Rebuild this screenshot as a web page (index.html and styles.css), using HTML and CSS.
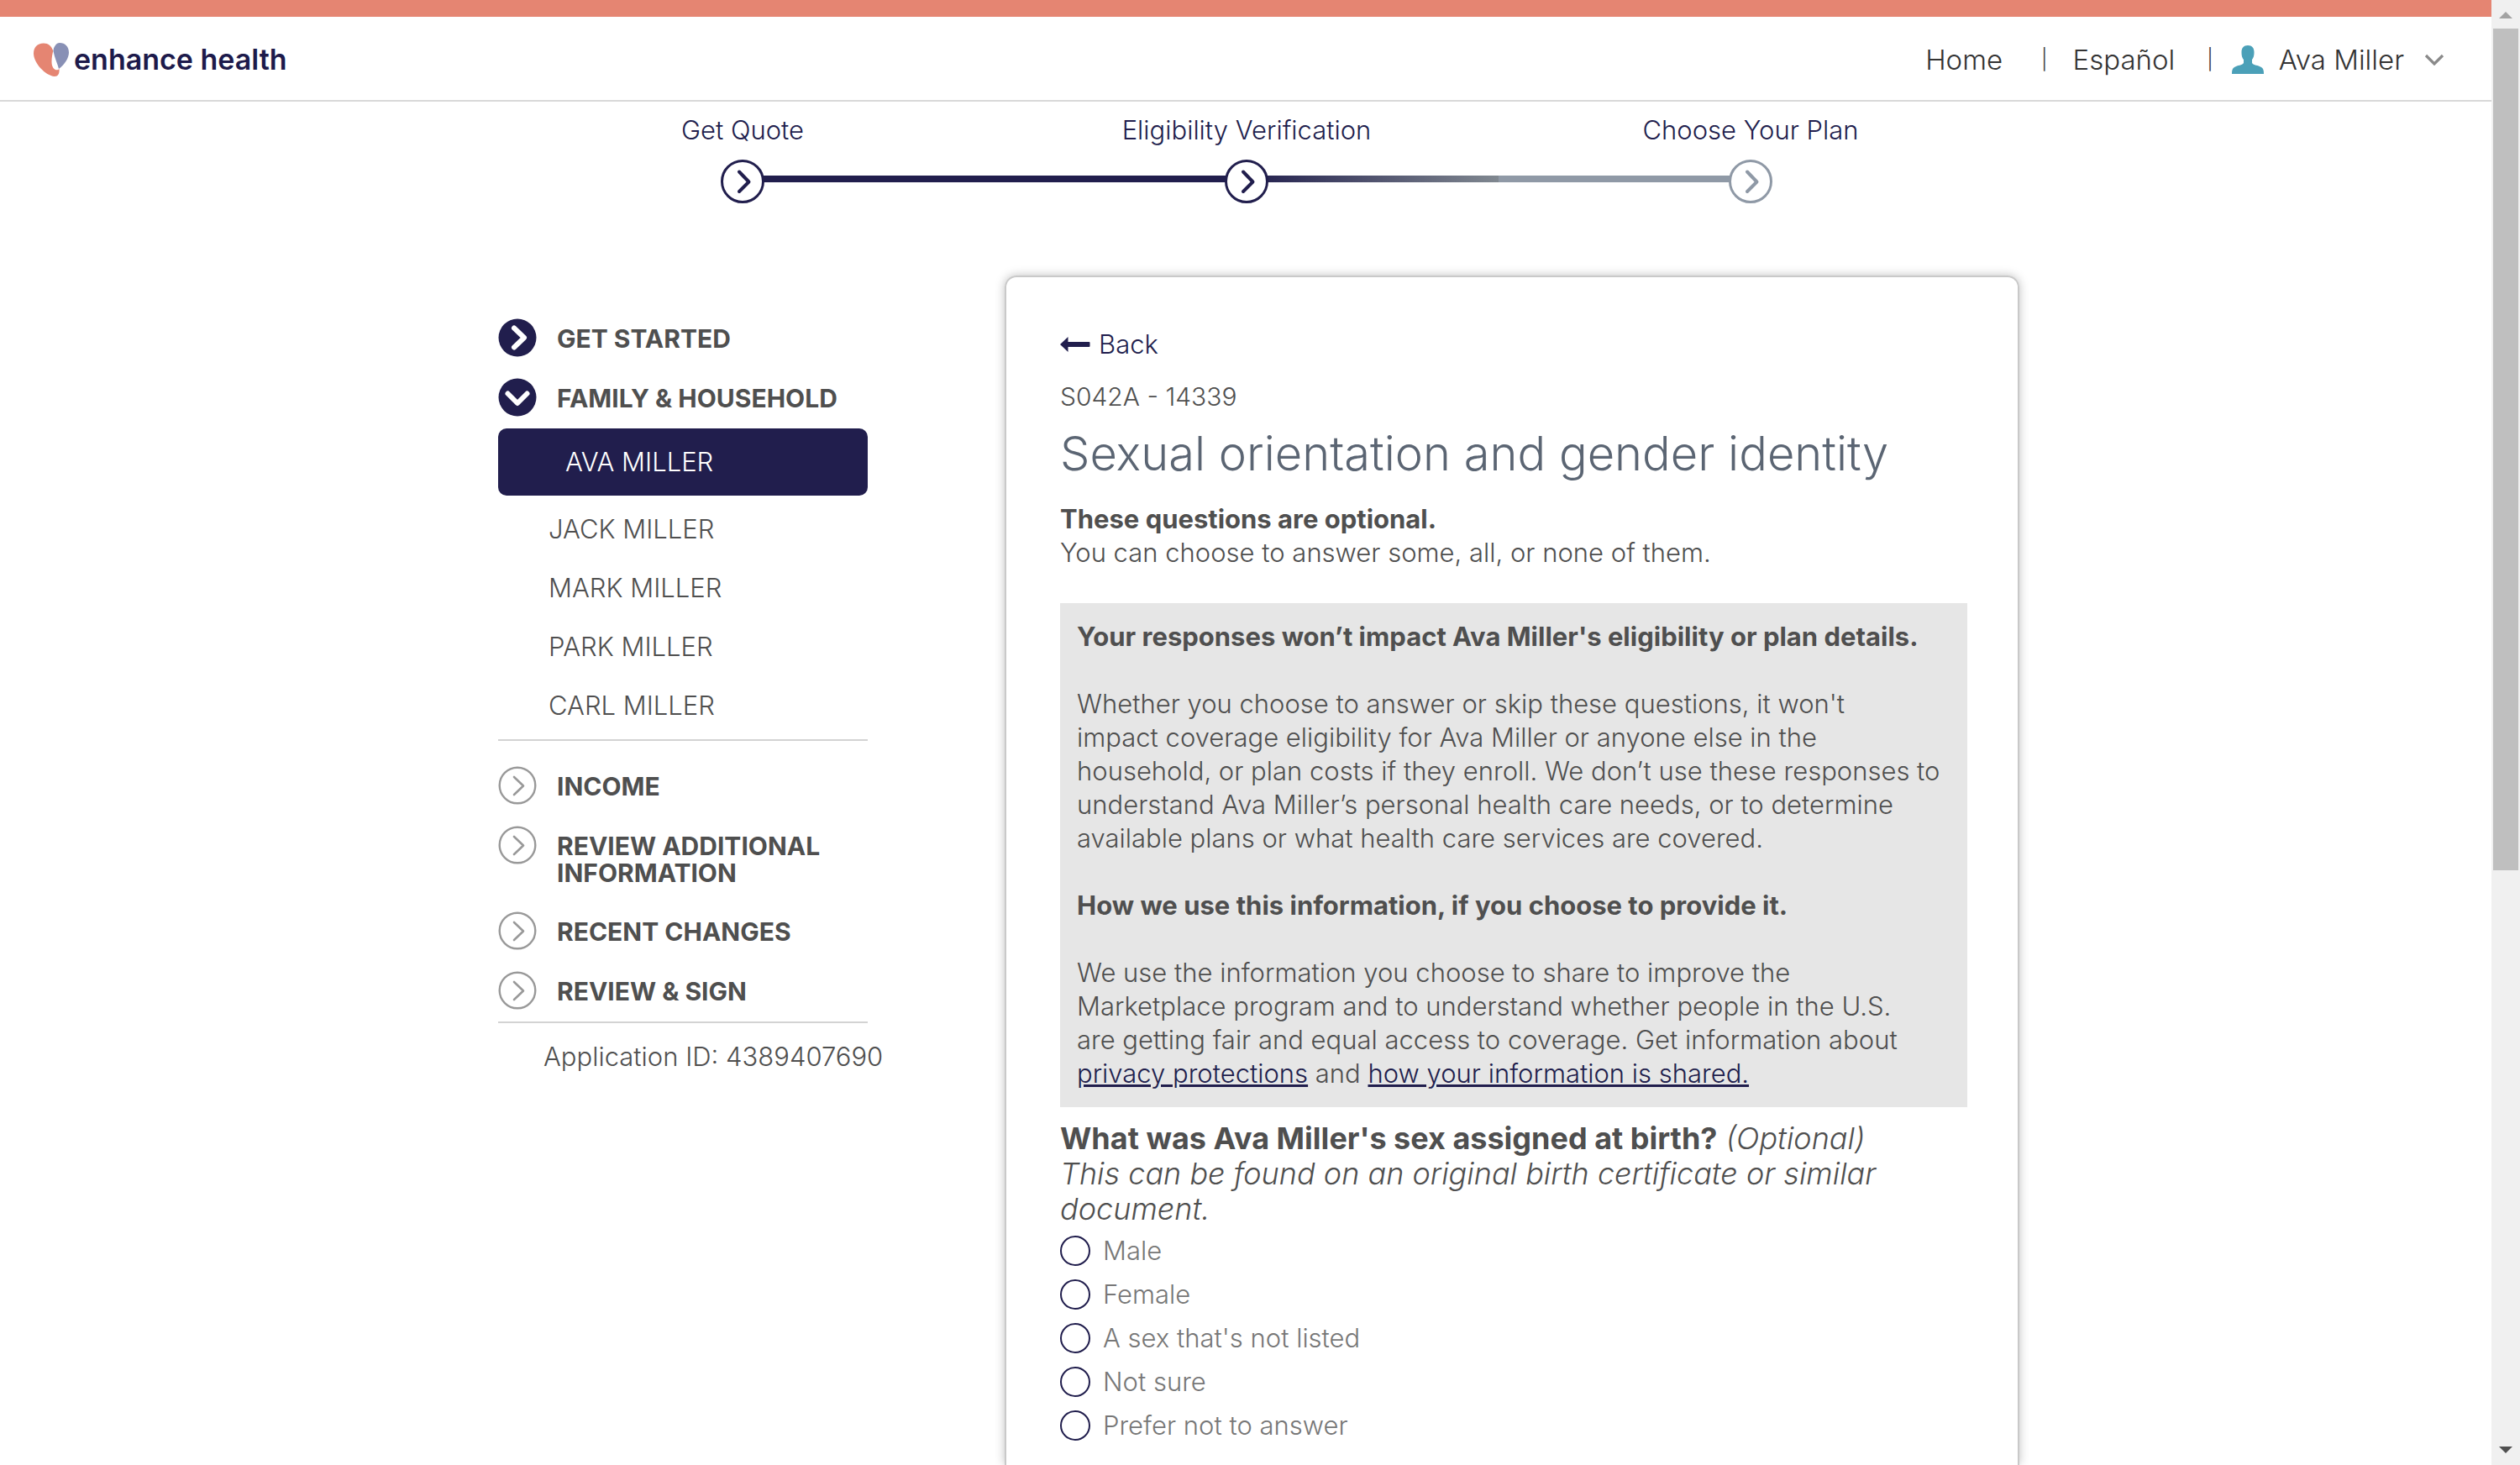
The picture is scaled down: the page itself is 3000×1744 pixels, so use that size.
FILE: index.html
```html
<!DOCTYPE html>
<html lang="en">
<head>
<meta charset="utf-8">
<meta name="viewport" content="width=device-width, initial-scale=1">
<title>Enhance Health - Eligibility Verification</title>
<link rel="stylesheet" href="styles.css">
</head>
<body>
<svg class="sprite" aria-hidden="true">
  <symbol id="step" viewBox="0 0 52 52"><circle cx="26" cy="26" r="24.5" fill="#fff" stroke="currentColor" stroke-width="3"/><path d="M22 14.500 33.500 26.500 22 38" fill="none" stroke="currentColor" stroke-width="4" stroke-linecap="round" stroke-linejoin="round"/></symbol>
  <symbol id="solid" viewBox="0 0 46 46"><circle cx="23" cy="23" r="22.500" fill="#211e4d"/><path d="M19 11.500 31 23 19 34.500" fill="none" stroke="#fff" stroke-width="6" stroke-linecap="round" stroke-linejoin="round"/></symbol>
  <symbol id="solid-down" viewBox="0 0 46 46"><circle cx="23" cy="23" r="22.500" fill="#211e4d"/><path d="M11.500 18.500 23 30 34.500 18.500" fill="none" stroke="#fff" stroke-width="6" stroke-linecap="round" stroke-linejoin="round"/></symbol>
  <symbol id="ring" viewBox="0 0 46 46"><circle cx="23" cy="23" r="21.300" fill="#fff" stroke="#999" stroke-width="2.400"/><path d="M19 13 30 23.500 19 34" fill="none" stroke="#999" stroke-width="2.600" stroke-linecap="round" stroke-linejoin="round"/></symbol>
</svg>

<header class="site-header">
  <a class="logo" href="#">
    <svg class="logo-mark" viewBox="0 0 42 40" aria-hidden="true">
      <path fill="#e58572" d="M12 .5C4 .5 0 5.500 0 12.500 0 24 14 39 25 40c4 0 6-3 5.500-9C28 34 21.500 32 21.500 22.500 21.500 17 22.500 13 23.300 9.500 21 3.500 17.500.5 12 .5z"/>
      <path fill="#8890b5" d="M31 0c-4 0-7.500 5-7.500 10 1.500 8 5 15 6.500 21C37 26 42 18 42 11.500 42 4.500 37.500 0 31 0z"/>
    </svg>
    <span>enhance health</span>
  </a>
  <nav class="top-nav">
    <a class="nav-home" href="#">Home</a>
    <span class="divider">|</span>
    <a class="nav-lang" href="#">Español</a>
    <span class="divider">|</span>
    <button class="user" type="button">
      <svg class="user-icon" viewBox="0 0 38 34" aria-hidden="true"><path fill="#4ba0b8" d="M19 0c5 0 7.500 3 7.500 8 0 5-1 7-2.500 9v4c2 3 7 2.500 11 5 2.500 1.500 3 4 3 8H0c0-4 .5-6.500 3-8 4-2.500 9-2 11-5v-4c-1.500-2-2.500-4-2.500-9 0-5 2.500-8 7.500-8z"/></svg>
      <span>Ava Miller</span>
      <svg class="caret" viewBox="0 0 24 14" aria-hidden="true"><path d="M2 2 12 12 22 2" fill="none" stroke="#8a8a8a" stroke-width="3.200"/></svg>
    </button>
  </nav>
</header>

<ol class="stepper">
  <li class="done"><span>Get Quote</span><svg><use href="#step"/></svg></li>
  <li class="current"><span>Eligibility Verification</span><svg><use href="#step"/></svg></li>
  <li class="next"><span>Choose Your Plan</span><svg><use href="#step"/></svg></li>
</ol>

<div class="layout">
  <nav class="sidebar">
    <a class="section" href="#"><svg><use href="#solid"/></svg><span>GET STARTED</span></a>
    <a class="section" href="#"><svg><use href="#solid-down"/></svg><span>FAMILY &amp; HOUSEHOLD</span></a>
    <ul class="members">
      <li><a class="active" href="#">AVA MILLER</a></li>
      <li><a href="#">JACK MILLER</a></li>
      <li><a href="#">MARK MILLER</a></li>
      <li><a href="#">PARK MILLER</a></li>
      <li><a href="#">CARL MILLER</a></li>
    </ul>
    <div class="later">
      <a class="section" href="#"><svg><use href="#ring"/></svg><span>INCOME</span></a>
      <a class="section" href="#"><svg><use href="#ring"/></svg><span>REVIEW ADDITIONAL INFORMATION</span></a>
      <a class="section" href="#"><svg><use href="#ring"/></svg><span>RECENT CHANGES</span></a>
      <a class="section" href="#"><svg><use href="#ring"/></svg><span>REVIEW &amp; SIGN</span></a>
    </div>
    <p class="app-id">Application ID: 4389407690</p>
  </nav>

  <main class="card">
    <a class="back" href="#"><svg viewBox="0 0 36 18" aria-hidden="true"><path fill="#211e4d" d="M0 9 9.500 0v6H34.500q1 0 1 1v4q0 1-1 1H9.500v6z"/></svg>Back</a>
    <p class="code">S042A - 14339</p>
    <h1>Sexual orientation and gender identity</h1>
    <p class="intro"><strong>These questions are optional.</strong><br>You can choose to answer some, all, or none of them.</p>
    <section class="notice">
      <p><strong>Your responses won’t impact Ava Miller's eligibility or plan details.</strong></p>
      <p>Whether you choose to answer or skip these questions, it won't<br>impact coverage eligibility for Ava Miller or anyone else in the<br>household, or plan costs if they enroll. We don’t use these responses to<br>understand Ava Miller’s personal health care needs, or to determine<br>available plans or what health care services are covered.</p>
      <p><strong>How we use this information, if you choose to provide it.</strong></p>
      <p>We use the information you choose to share to improve the<br>Marketplace program and to understand whether people in the U.S.<br>are getting fair and equal access to coverage. Get information about<br><a href="#">privacy protections</a> and <a href="#">how your information is shared.</a></p>
    </section>
    <fieldset class="question">
      <legend><strong>What was Ava Miller's sex assigned at birth?</strong> <em>(Optional)<br>This can be found on an original birth certificate or similar<br>document.</em></legend>
      <label><input type="radio" name="sex">Male</label>
      <label><input type="radio" name="sex">Female</label>
      <label><input type="radio" name="sex">A sex that's not listed</label>
      <label><input type="radio" name="sex">Not sure</label>
      <label><input type="radio" name="sex">Prefer not to answer</label>
    </fieldset>
  </main>
</div>

<div class="scrollbar" aria-hidden="true">
  <svg viewBox="0 0 16 8"><path fill="#a3a3a3" d="M0 8 8 0 16 8z"/></svg>
  <div class="thumb"></div>
  <svg viewBox="0 0 16 8"><path fill="#505050" d="M0 0H16L8 8z"/></svg>
</div>
</body>
</html>
```

FILE: styles.css
```css
* { box-sizing: border-box; }

html { height: 100%; }

body {
  display: flex;
  flex-direction: column;
  min-height: 100%;
  margin: 0;
  padding-right: 34px;
  background: #fff;
  color: #4f4f4f;
  font: 300 31px/40px Inter, "Open Sans", sans-serif;
  font-optical-sizing: none;
}

p, h1, ul, ol { margin: 0; padding: 0; list-style: none; }
a { color: inherit; text-decoration: none; }
strong { font-weight: 700; }
.sprite { position: absolute; width: 0; height: 0; }

/* Header */
.site-header {
  display: flex;
  justify-content: space-between;
  align-items: center;
  height: 121px;
  padding: 2px 56px 0 40px;
  border-top: 20px solid #e58572;
  border-bottom: 2px solid #d9d9d9;
}
.logo {
  display: flex;
  align-items: center;
  gap: 6px;
  color: #1d1a4b;
  font-size: 34px;
  font-weight: 600;
}
.logo-mark { width: 42px; height: 40px; }
.top-nav {
  display: flex;
  align-items: center;
  color: #333;
  font-size: 33px;
}
.divider { font-size: 24px; }
.nav-home { margin-right: 46px; }
.nav-lang { margin: 0 38px 0 30px; }
.user {
  display: flex;
  align-items: center;
  margin-left: 22px;
  padding: 0;
  border: 0;
  background: none;
  color: inherit;
  font: inherit;
  font-optical-sizing: inherit;
}
.user-icon { width: 38px; height: 34px; margin-right: 18px; }
.caret { width: 24px; height: 14px; margin-left: 24px; }

/* Progress steps */
.stepper {
  display: grid;
  grid-template-columns: repeat(3, 600px);
  justify-content: center;
  padding: 14px 0 0 2px;
  color: #211e4d;
}
.stepper li {
  display: flex;
  flex-direction: column;
  align-items: center;
  gap: 15px;
  background: linear-gradient(#211e4d, #211e4d) no-repeat right 74px / 50% 8px;
}
.stepper svg { width: 52px; height: 52px; }
.stepper .current {
  background:
    linear-gradient(#211e4d, #211e4d) no-repeat left 74px / 50% 8px,
    linear-gradient(90deg, #211e4d, #808890) no-repeat right 74px / 50% 8px;
}
.stepper .next { background: linear-gradient(#8f99a6, #8f99a6) no-repeat left 74px / 50% 8px; }
.stepper .next svg { color: #8f99a6; }

/* Layout */
.layout {
  flex: 1;
  display: grid;
  grid-template-columns: 440px 1208px;
  justify-content: center;
  column-gap: 163px;
  padding: 86px 0 0 31px;
}

/* Sidebar */
.sidebar { padding-top: 51px; }
.section {
  display: flex;
  gap: 24px;
  margin-bottom: 25px;
  font-weight: 700;
  font-size: 30px;
  line-height: 32px;
}
.section svg { flex: none; width: 46px; height: 46px; }
.section span { padding: 8px 0 5px; }
.members {
  margin-top: -11px;
  padding-bottom: 5px;
  border-bottom: 2px solid #d3d3d3;
}
.members a { display: block; padding: 0 60px; line-height: 70px; }
.members .active {
  margin-bottom: 5px;
  padding: 0 80px;
  border-radius: 10px;
  background: #211e4d;
  color: #fff;
  line-height: 80px;
}
.later {
  padding-top: 30px;
  border-bottom: 2px solid #d3d3d3;
}
.later .section:last-child { margin-bottom: 14px; }
.app-id { padding: 20px 0 0 54px; white-space: nowrap; }

/* Card */
.card {
  padding: 60px 60px 0 64px;
  border: 2px solid #c9c9c9;
  border-bottom: 0;
  border-radius: 14px 14px 0 0;
  box-shadow: 0 0 12px rgba(0, 0, 0, .25);
}
.back {
  display: flex;
  align-items: center;
  gap: 10px;
  color: #211e4d;
}
.back svg { width: 36px; height: 18px; }
.code { margin-top: 22px; font-size: 30px; }
h1 {
  margin-top: 18px;
  color: #5b6573;
  font-size: 56px;
  font-weight: 300;
  line-height: 60px;
}
.intro { margin-top: 28px; }
.notice {
  display: grid;
  row-gap: 40px;
  margin-top: 40px;
  padding: 20px;
  background: #e6e6e6;
  white-space: nowrap;
}
.notice a { color: #211e4d; text-decoration: underline; }
.question {
  display: grid;
  margin: 16px 0 0;
  padding: 0;
  border: 0;
}
.question legend {
  padding: 0;
  margin-bottom: 3px;
  font-size: 36px;
  line-height: 42px;
}
.question label {
  display: flex;
  align-items: center;
  gap: 15px;
  height: 52px;
  color: #777;
}
.question input {
  appearance: none;
  width: 36px;
  height: 36px;
  margin: 0;
  border: 2px solid #211e4d;
  border-radius: 50%;
}

/* Scrollbar */
.scrollbar {
  position: fixed;
  inset: 0 0 0 auto;
  display: flex;
  flex-direction: column;
  align-items: center;
  width: 34px;
  padding: 14px 2px;
  background: #f0f0f0;
}
.scrollbar svg { width: 16px; height: 8px; }
.thumb {
  width: 30px;
  height: 58.4%;
  margin: 12px 0 auto;
  background: #bfbfbf;
}
```
